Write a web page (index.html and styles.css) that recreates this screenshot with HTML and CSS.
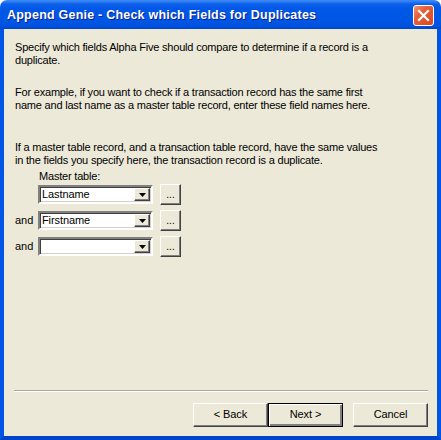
FILE: index.html
```html
<!DOCTYPE html>
<html>
<head>
<meta charset="utf-8">
<link rel="stylesheet" href="styles.css">
</head>
<body>
<div class="window">
  <div class="titlebar">
    <span class="title">Append Genie - Check which Fields for Duplicates</span>
    <div class="close">
      <svg width="13" height="13" viewBox="0 0 13 13"><path d="M2 2 L11 11 M11 2 L2 11" stroke="#fff" stroke-width="2.2" stroke-linecap="square"/></svg>
    </div>
  </div>
  <div class="frame">
    <div class="content">
      <p class="para p1">Specify which fields Alpha Five should compare to determine if a record is a<br>duplicate.</p>
      <p class="para p2">For example, if you want to check if a transaction record has the same first<br>name and last name as a master table record, enter these field names here.</p>
      <p class="para p3">If a master table record, and a transaction table record, have the same values<br>in the fields you specify here, the transaction record is a duplicate.</p>
      <div class="master-label">Master table:</div>
      <div class="rows">
        <div class="row">
          <span class="and"></span>
          <div class="combo"><span class="value">Lastname</span><span class="dd"><svg width="7" height="4" viewBox="0 0 7 4"><path d="M0 0 H7 L3.5 4 Z" fill="#000"/></svg></span></div>
          <div class="ellipsis">...</div>
        </div>
        <div class="row">
          <span class="and">and</span>
          <div class="combo"><span class="value">Firstname</span><span class="dd"><svg width="7" height="4" viewBox="0 0 7 4"><path d="M0 0 H7 L3.5 4 Z" fill="#000"/></svg></span></div>
          <div class="ellipsis">...</div>
        </div>
        <div class="row">
          <span class="and">and</span>
          <div class="combo"><span class="value"></span><span class="dd"><svg width="7" height="4" viewBox="0 0 7 4"><path d="M0 0 H7 L3.5 4 Z" fill="#000"/></svg></span></div>
          <div class="ellipsis">...</div>
        </div>
      </div>
    </div>
    <div class="footer">
      <div class="separator"></div>
      <div class="buttons">
        <div class="btn">&lt; Back</div>
        <div class="btn default">Next &gt;</div>
        <div class="btn cancel">Cancel</div>
      </div>
    </div>
  </div>
</div>
</body>
</html>
```

FILE: styles.css
```css
* { box-sizing: border-box; }
html, body { margin: 0; padding: 0; background: #ffffff; }
body {
  width: 441px;
  height: 440px;
  overflow: hidden;
  font-family: "Liberation Sans", Arial, sans-serif;
  font-size: 11px;
}
.window {
  width: 441px;
  height: 440px;
  display: flex;
  flex-direction: column;
}
.titlebar {
  height: 29px;
  flex: none;
  border-radius: 7px 7px 0 0;
  background: linear-gradient(to bottom, #3d8ef5 0px, #2a79f3 2px, #0c5fe9 4px, #0058e6 9px, #0056e5 20px, #0052df 26px, #0045cc 29px);
  display: flex;
  align-items: center;
  justify-content: space-between;
  padding: 0 7px 0 7px;
}
.title {
  color: #ffffff;
  font-family: "Liberation Sans", Arial, sans-serif;
  font-weight: bold;
  font-size: 12.5px;
  letter-spacing: 0.22px;
  text-shadow: 1px 1px 0 #0a1e8c;
  margin-top: 1px;
}
.close {
  width: 21px;
  height: 21px;
  border: 1px solid #ffffff;
  border-radius: 3px;
  background: linear-gradient(135deg, #f39476 0%, #e5603b 35%, #d9471e 100%);
  display: flex;
  align-items: center;
  justify-content: center;
  margin-top: 1px;
}
.frame {
  flex: 1;
  display: flex;
  flex-direction: column;
  background: #ece9d8;
  border-left: 4px solid #0055e5;
  border-right: 4px solid #0055e5;
  border-bottom: 4px solid #0044cc;
}
.content {
  flex: 1;
  padding: 12px 10px 0 11px;
  color: #000000;
}
.para {
  margin: 0;
  line-height: 13px;
  letter-spacing: -0.2px;
  white-space: nowrap;
}
.p2 { margin-top: 19px; }
.p3 { margin-top: 29px; }
.master-label {
  margin-top: 3px;
  margin-left: 24px;
  line-height: 13px;
  letter-spacing: -0.2px;
}
.rows {
  margin-top: 1px;
  display: flex;
  flex-direction: column;
  gap: 5px;
}
.row {
  display: flex;
  align-items: flex-start;
  height: 21px;
}
.and {
  width: 23px;
  line-height: 21px;
  flex: none;
}
.combo {
  width: 115px;
  height: 19px;
  margin-top: 1px;
  background: #ffffff;
  border-style: solid;
  border-width: 2px;
  border-color: #808080 #ffffff #ffffff #808080;
  box-shadow: inset 1px 1px 0 #404040, inset -1px -1px 0 #d4d0c8;
  display: flex;
  align-items: stretch;
  padding: 1px;
}
.value {
  flex: 1;
  line-height: 13px;
  padding-left: 1px;
  letter-spacing: -0.1px;
}
.dd {
  width: 16px;
  flex: none;
  background: #ece9d8;
  border: 1px solid;
  border-color: #ffffff #404040 #404040 #ffffff;
  box-shadow: inset -1px -1px 0 #808080;
  display: flex;
  align-items: center;
  justify-content: center;
}
.ellipsis {
  width: 21px;
  height: 21px;
  margin-left: 7px;
  background: #ece9d8;
  border: 1px solid;
  border-color: #ffffff #404040 #404040 #ffffff;
  box-shadow: inset -1px -1px 0 #808080;
  text-align: center;
  line-height: 19px;
  font-size: 10px;
}
.footer {
  flex: none;
  padding: 0 9px 9px 10px;
}
.separator {
  height: 2px;
  border-top: 1px solid #aca899;
  border-bottom: 1px solid #ffffff;
}
.buttons {
  margin-top: 11px;
  display: flex;
  justify-content: flex-end;
}
.btn {
  width: 75px;
  height: 24px;
  background: #ece9d8;
  border: 1px solid;
  border-color: #ffffff #404040 #404040 #ffffff;
  box-shadow: inset -1px -1px 0 #808080;
  text-align: center;
  line-height: 21px;
  letter-spacing: -0.1px;
}
.btn.default {
  border: 1px solid #000000;
  box-shadow: inset 1px 1px 0 #ffffff, inset -2px -2px 0 #808080;
}
.btn.cancel { margin-left: 10px; }
```
